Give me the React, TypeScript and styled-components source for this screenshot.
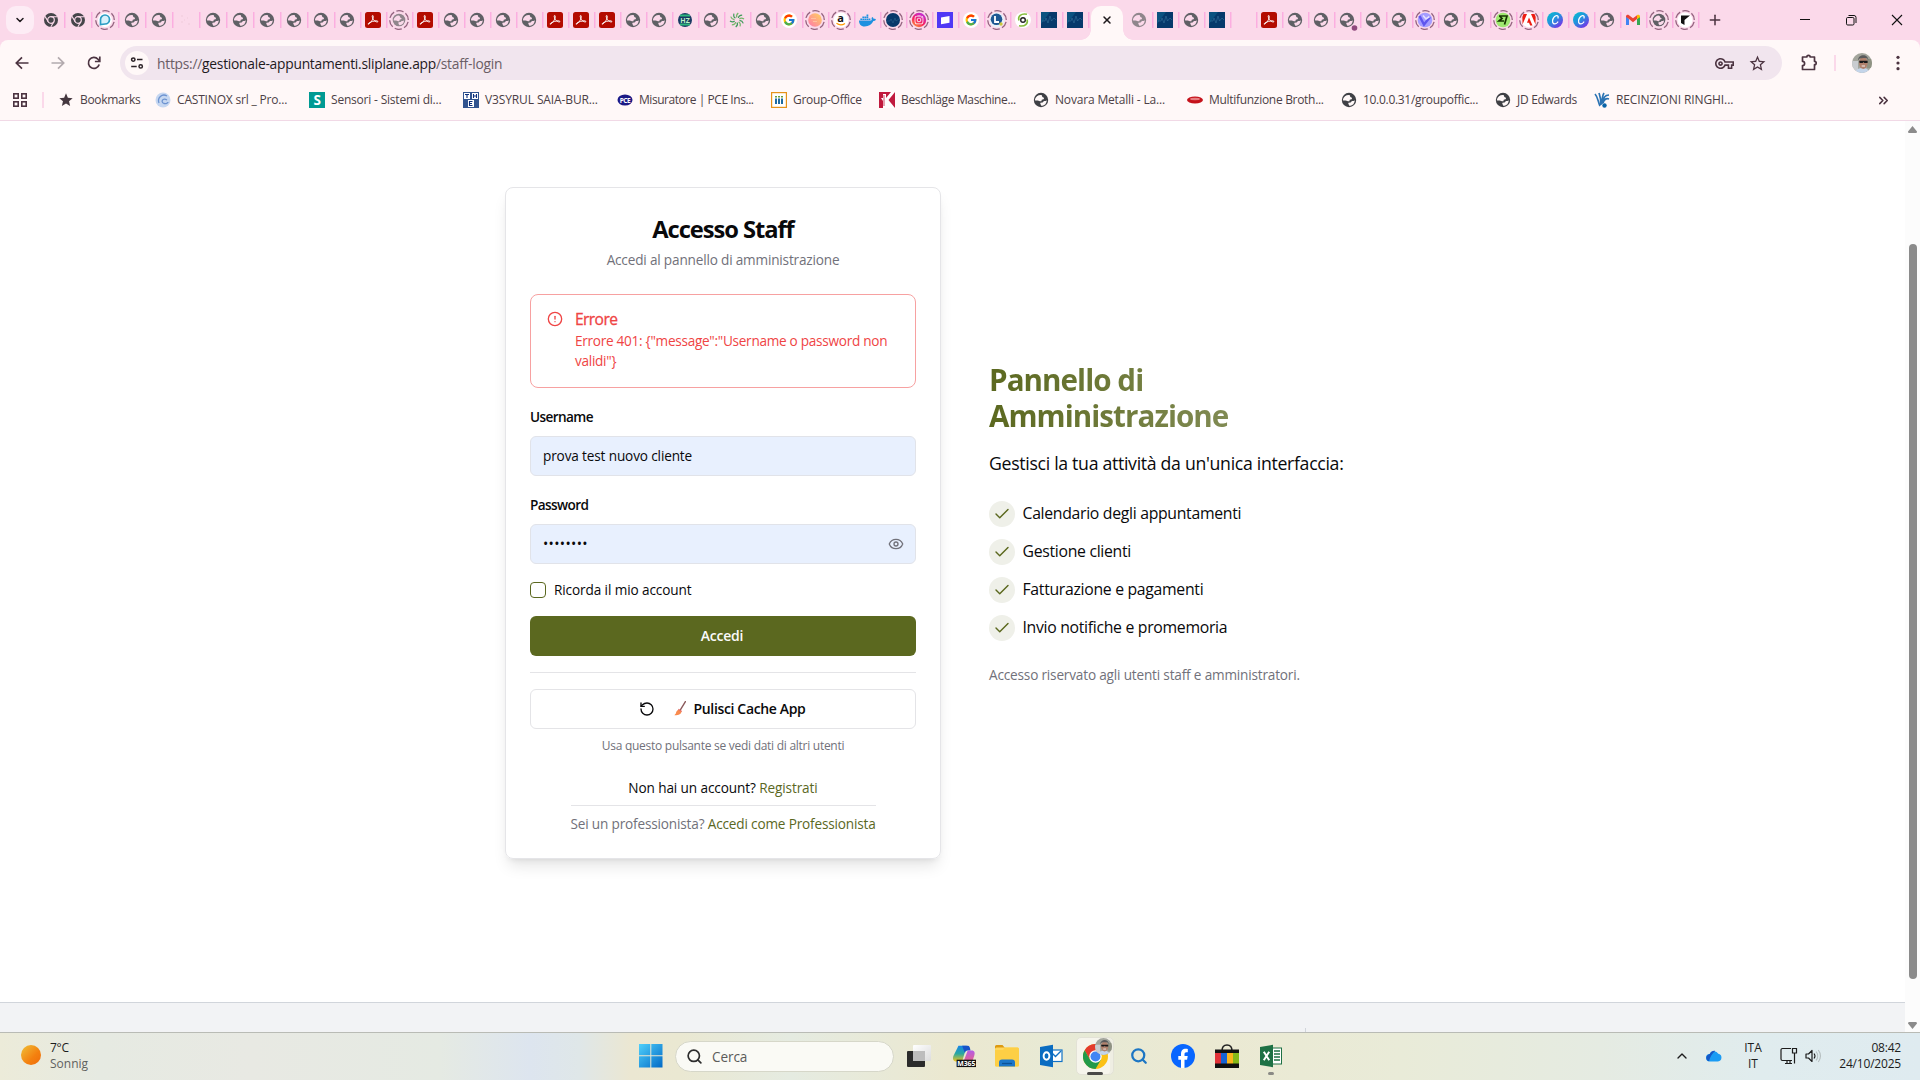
import React from "react";
import styled, { createGlobalStyle, css } from "styled-components";
import { Check, CircleAlert, Eye, RotateCcw, ChevronUp, ChevronDown, X, Plus, Search, ChevronsRight } from "lucide-react";
import { FcGoogle } from "react-icons/fc";
import { FaDocker, FaInstagram } from "react-icons/fa";
import { MdOutlineVpnKey, MdStarBorder, MdStar } from "react-icons/md";

const GlobalStyle = createGlobalStyle`
  * { box-sizing: border-box; }
  body { margin: 0; width: 1920px; height: 1080px; overflow: hidden; background: #fff; }
  body, button, input { font-family: "Open Sans", "Noto Sans", sans-serif; }
`;

const Screen = styled.div`
  width: 1920px;
  height: 1080px;
  display: flex;
  flex-direction: column;
  overflow: hidden;
`;

/* ---------- tab strip ---------- */

const TabStrip = styled.div`
  height: 40px;
  flex: none;
  display: flex;
  align-items: center;
  background: #fbd9ea;
  padding-left: 6px;
`;
const TabSearch = styled.div`
  width: 28px;
  height: 28px;
  margin-right: 3.5px;
  border-radius: 10px;
  background: #fdecf5;
  display: flex;
  align-items: center;
  justify-content: center;
`;
const Tab = styled.div<{ $w: number }>`
  width: ${(p) => p.$w}px;
  height: 16px;
  flex: none;
  display: flex;
  align-items: center;
  justify-content: center;
  border-right: 1px solid #fbaee0;
  box-shadow: 0.5px 0 0 #fbaee0;
`;
const ActiveTab = styled.div`
  width: 32px;
  height: 34px;
  flex: none;
  align-self: flex-end;
  margin: 0 3.5px 0 2.5px;
  border-radius: 10px 10px 0 0;
  background: #fff8f8;
  display: flex;
  align-items: center;
  justify-content: center;
  padding-bottom: 6px;
  position: relative;
  &::before, &::after {
    content: "";
    position: absolute;
    bottom: 0;
    width: 10px;
    height: 10px;
  }
  &::before { left: -10px; background: radial-gradient(circle at 0 0, transparent 9.5px, #fff8f8 10px); }
  &::after { right: -10px; background: radial-gradient(circle at 100% 0, transparent 9.5px, #fff8f8 10px); }
`;
const NewTab = styled.div`
  width: 16px;
  height: 16px;
  margin-left: 8px;
  color: #4c3441;
  display: flex;
`;
const WindowButtons = styled.div`
  margin-left: auto;
  display: flex;
  align-items: center;
  padding-right: 15px;
  gap: 30px;
  svg { display: block; }
`;

/* ---------- toolbar ---------- */

const ToolbarBack = styled.div`
  background: #fbd9ea;
  flex: none;
`;
const Toolbar = styled.div`
  height: 46px;
  background: #fff8f8;
  border-radius: 8px 8px 0 0;
  display: flex;
  align-items: center;
  padding: 0 12px 0 12px;
`;
const NavButton = styled.div<{ $dim?: boolean }>`
  width: 20px;
  height: 20px;
  flex: none;
  margin-right: 16px;
  color: ${(p) => (p.$dim ? "#b3aaae" : "#4c3441")};
  svg { display: block; }
`;
const UrlBar = styled.div`
  width: 1662px;
  height: 34px;
  flex: none;
  border-radius: 17px;
  background: #f1e5ee;
  display: flex;
  align-items: center;
  padding: 0 15px 0 5px;
  color: #5d5058;
`;
const SiteChip = styled.div`
  width: 24px;
  height: 24px;
  border-radius: 12px;
  background: #fff8f8;
  display: flex;
  align-items: center;
  justify-content: center;
`;
const Url = styled.div`
  margin-left: 8px;
  font-size: 13.8px;
  letter-spacing: -0.25px;
  color: #6a5d65;
  white-space: pre;
  flex: 1;
  b { font-weight: 400; color: #1f1a1d; }
`;
const UrlIcons = styled.div`
  display: flex;
  align-items: center;
  gap: 14px;
  color: #4c3441;
  svg { display: block; }
`;
const ToolbarRight = styled.div`
  display: flex;
  align-items: center;
  color: #4c3441;
  margin-left: 17px;
  svg { display: block; flex: none; }
`;
const ToolbarLine = styled.div`
  width: 2px;
  height: 16px;
  margin: 0 16px 0 15px;
  background: #fbd9ea;
`;

const Bookmarks = styled.div`
  height: 35px;
  flex: none;
  background: #fff8f8;
  border-bottom: 1px solid #f1d9e6;
  display: flex;
  align-items: center;
  padding: 0 29px 6px 12px;
`;
const BookmarkLine = styled.div`
  width: 2px;
  height: 16px;
  margin: 0 14px 0 14px;
  background: #fbd9ea;
`;
const Bookmark = styled.div<{ $w: number; $ls?: number }>`
  width: ${(p) => p.$w}px;
  flex: none;
  display: flex;
  align-items: center;
  gap: 6px;
  font-size: 12px;
  line-height: 16px;
  letter-spacing: ${(p) => p.$ls ?? -0.3}px;
  color: #4c3f46;
  white-space: nowrap;
  svg { display: block; flex: none; }
`;
const Overflow = styled.div`
  margin-left: auto;
  color: #4c3441;
  svg { display: block; }
`;

/* ---------- page ---------- */

const Viewport = styled.div`
  height: 911px;
  flex: none;
  display: flex;
`;
const Page = styled.div`
  width: 1905px;
  display: flex;
  flex-direction: column;
  background: #fff;
`;
const Main = styled.main`
  height: 881px;
  padding: 66px 0 0 505px;
  display: flex;
  align-items: flex-start;
  gap: 48px;
`;
const Card = styled.section`
  width: 436px;
  height: 672px;
  border: 1px solid #e5e5e8;
  border-radius: 8px;
  padding: 25px 24px 24px;
  box-shadow: 0 10px 15px -3px rgba(0, 0, 0, 0.1), 0 4px 6px -4px rgba(0, 0, 0, 0.1);
  display: flex;
  flex-direction: column;
`;
const Title = styled.h1`
  margin: 0;
  font-size: 23.7px;
  line-height: 32px;
  font-weight: 700;
  letter-spacing: -1.05px;
  text-align: center;
  color: #09090b;
`;
const Muted = styled.p<{ $small?: boolean; $top?: number }>`
  margin: ${(p) => p.$top ?? 0}px 0 0;
  font-size: ${(p) => (p.$small ? 12 : 13.6)}px;
  line-height: ${(p) => (p.$small ? 16 : 20)}px;
  letter-spacing: ${(p) => (p.$small ? -0.27 : -0.18)}px;
  text-align: center;
  color: #71717a;
  white-space: nowrap;
`;
const Alert = styled.div`
  height: 94px;
  margin-top: 24px;
  border: 1px solid #f7a1a1;
  border-radius: 8px;
  padding: 16px 16px;
  display: flex;
  gap: 12px;
  color: #ef4444;
  svg { flex: none; }
`;
const AlertTitle = styled.div`
  font-size: 15.6px;
  font-weight: 500;
  line-height: 17px;
  letter-spacing: -0.6px;
  margin-bottom: 3px;
  -webkit-text-stroke: 0.3px #ef4444;
`;
const AlertText = styled.div`
  font-size: 13.6px;
  line-height: 20px;
  letter-spacing: -0.28px;
  white-space: pre;
`;
const FieldLabel = styled.label`
  margin: 19px 0 9px;
  font-size: 13.6px;
  line-height: 20px;
  font-weight: 600;
  letter-spacing: -0.6px;
  color: #09090b;
`;
const Field = styled.div<{ $dots?: boolean }>`
  height: 40px;
  flex: none;
  border: 1px solid #e1e3e9;
  border-radius: 6px;
  background: #e8f0fe;
  padding: 0 11px 1px 12px;
  display: flex;
  align-items: center;
  justify-content: space-between;
  font-size: ${(p) => (p.$dots ? 14 : 13.6)}px;
  letter-spacing: ${(p) => (p.$dots ? 0.35 : -0.14)}px;
  color: #09090b;
  svg { color: #71717a; }
`;
const Remember = styled.label`
  margin-top: 16px;
  height: 20px;
  display: flex;
  align-items: center;
  gap: 8px;
  font-size: 13.6px;
  line-height: 20px;
  letter-spacing: -0.11px;
  color: #09090b;
`;
const Box = styled.span`
  width: 16px;
  height: 16px;
  border: 1px solid #5b681f;
  border-radius: 4px;
`;
const Button = styled.button<{ $primary?: boolean }>`
  height: 40px;
  flex: none;
  margin-top: 16px;
  padding: 0 2px 1px 0;
  border-radius: 6px;
  font-size: 14px;
  font-weight: 600;
  letter-spacing: ${(p) => (p.$primary ? -0.2 : -0.35)}px;
  display: flex;
  align-items: center;
  justify-content: center;
  ${(p) =>
    p.$primary
      ? css`border: 0; background: #5b681f; color: #fafafa;`
      : css`border: 1px solid #e4e4e7; background: #fff; color: #09090b;`}
`;
const ButtonText = styled.span`
  margin-left: 8px;
`;
const BroomSlot = styled.span`
  margin-left: 19px;
  display: flex;
`;
const Rule = styled.div`
  height: 1px;
  flex: none;
  margin-top: 16px;
  background: #e4e4e7;
`;
const Links = styled.div`
  align-self: center;
  width: 305px;
  margin-top: 24px;
  font-size: 13.6px;
  line-height: 20px;
  text-align: center;
  white-space: nowrap;
  color: #09090b;
`;
const LinkLine = styled.div<{ $muted?: boolean; $ls: number }>`
  letter-spacing: ${(p) => p.$ls}px;
  ${(p) => p.$muted && css`margin-top: 7px; padding-top: 8px; border-top: 1px solid #e4e4e7; color: #71717a;`}
  a { color: #5b681f; }
`;

const Info = styled.section`
  width: 411px;
  padding-top: 175px;
  color: #09090b;
`;
const Heading = styled.h2`
  margin: 0;
  font-size: 29.6px;
  line-height: 36px;
  font-weight: 700;
  letter-spacing: -0.95px;
  color: transparent;
  background: linear-gradient(to right, #5b681f, #9ca479);
  background-clip: text;
  -webkit-background-clip: text;
  white-space: pre;
`;
const Lead = styled.p`
  margin: 15px 0 0;
  font-size: 17.7px;
  line-height: 28px;
  letter-spacing: -0.31px;
  white-space: nowrap;
`;
const List = styled.ul`
  margin: 24px 0 0;
  padding: 0;
  list-style: none;
  display: grid;
  gap: 12px;
`;
const Item = styled.li`
  height: 26px;
  display: flex;
  align-items: center;
  gap: 8px;
  font-size: 15.8px;
  letter-spacing: -0.31px;
  span + span { line-height: 24px; padding-bottom: 2px; margin-left: -0.5px; }
`;
const Bullet = styled.span`
  width: 26px;
  height: 26px;
  border-radius: 50%;
  background: #eff0e9;
  color: #5b681f;
  display: flex;
  align-items: center;
  justify-content: center;
`;
const Note = styled(Muted)`
  margin-top: 24px;
  text-align: left;
`;
const Footer = styled.footer`
  height: 30px;
  border-top: 1px solid #d1d5db;
  background: #f2f3f5;
  padding: 25px 0 0 1305px;
`;
const FooterTick = styled.div`
  width: 1px;
  height: 4px;
  background: #d1d5db;
`;
const Scrollbar = styled.div`
  width: 15px;
  background: #fcfcfc;
  display: flex;
  flex-direction: column;
  align-items: center;
  justify-content: space-between;
  padding: 5px 0 3px 0;
  svg { display: block; }
`;
const Thumb = styled.div`
  width: 8px;
  height: 735px;
  margin-top: 68px;
  border-radius: 4px;
  background: #8b8b8b;
`;

/* ---------- taskbar ---------- */

const Taskbar = styled.div`
  height: 48px;
  flex: none;
  border-top: 1px solid #b9bbb5;
  background: linear-gradient(to right, #ecebd9 0, #e6eae2 100px, #e8e9e3 250px, #e5eae3 440px, #dde5ef 530px, #dfe7e8 580px, #ebe7d2 630px,
    #eae8d2 680px, #e5ebe1 790px, #ebe8d0 950px, #e7ead6 1080px, #ebe9d2 1200px, #e9ebd8 1400px, #e5ebe2 1600px, #e0ecee 1760px, #dfebf0 1920px);
  display: flex;
  align-items: center;
  padding: 0 19px 1px 21px;
  svg { display: block; flex: none; }
`;
const Sun = styled.div`
  width: 20px;
  height: 20px;
  border-radius: 50%;
  margin-top: -2px;
  background: linear-gradient(135deg, #efc138, #f4810f 60%, #ee6a0a);
`;
const Weather = styled.div`
  width: 589px;
  margin: 0 0 0 9px;
  font-size: 12px;
  line-height: 16px;
  letter-spacing: -0.3px;
  color: #1c1c1c;
  span { color: #5f615e; letter-spacing: 0; }
`;
const TaskSearch = styled.div`
  width: 219px;
  height: 31px;
  margin: 0 12px 0 12px;
  border-radius: 16px;
  border: 1px solid #d6d7c9;
  background: #fafaf5;
  display: flex;
  align-items: center;
  padding-left: 10px;
  gap: 9px;
  font-size: 13.6px;
  letter-spacing: -0.1px;
  color: #5c5c5a;
  svg { color: #2d2d2d; }
`;
const TaskIcon = styled.div<{ $w?: number; $before?: number }>`
  width: ${(p) => p.$w ?? 44}px;
  height: 46px;
  flex: none;
  margin-left: ${(p) => p.$before ?? 0}px;
  display: flex;
  align-items: center;
  justify-content: center;
  position: relative;
`;
const ActiveTile = styled.div`
  width: 38px;
  height: 38px;
  border-radius: 5px;
  border: 1px solid #e3e2d6;
  background: #f6f5ec;
  box-shadow: inset -3px 0 0 #efeee3;
  display: flex;
  align-items: center;
  justify-content: center;
`;
const FaceBadge = styled.div`
  position: absolute;
  left: 22px;
  top: 5px;
`;
const Indicator = styled.div<{ $w: number; $c: string }>`
  position: absolute;
  bottom: 4px;
  left: calc(50% - ${(p) => p.$w / 2}px);
  width: ${(p) => p.$w}px;
  height: 3px;
  border-radius: 2px;
  background: ${(p) => p.$c};
`;
const Tray = styled.div`
  margin-left: auto;
  display: flex;
  align-items: center;
  color: #1c1c1c;
  font-size: 12px;
  line-height: 16px;
`;
const CloudSlot = styled.div`
  margin-left: 16px;
`;
const Lang = styled.div`
  width: 46px;
  margin: 0 4px 0 8px;
  text-align: center;
`;
const Clock = styled.div`
  width: 71px;
  text-align: right;
  letter-spacing: -0.2px;
  white-space: nowrap;
`;

/* ---------- drawings ---------- */

const Globe = ({ c = "#5f6065", s = 16, hole = "#fbd9ea" }: { c?: string; s?: number; hole?: string }) => (
  <svg width={s} height={s} viewBox="0 0 16 16">
    <circle cx="8" cy="8" r="7.2" fill={c} />
    <path d="M8.2 3c1 .2.8 1.400 1.200 2 .5.600 1.700.2 1.600 1.400-.1 1.100-1.500.8-2.200 1.300-.7.5.3 1.300-.6 1.600-1.200.3-2.200-.7-3.500-.8-1-.1-2.200.100-2.900-.3A6 6 0 0 1 8.200 3z" fill={hole} />
    <path d="M13.800 8.200c-1 .8-1.700.9-2.500.9-.9.100-.8 1.100-1.700 1.300-.9.300-2.200-.2-2.300.9-.1.900.8 1.700 1.300 2.600a6 6 0 0 0 5.200-5.700z" fill={hole} />
  </svg>
);
const Ring = ({ children }: { children?: React.ReactNode }) => (
  <svg width="20" height="20" viewBox="0 0 20 20" overflow="visible">
    <circle cx="10" cy="10" r="9.300" fill="none" stroke="#94637f" strokeWidth="1.300" strokeDasharray="7.300 2.440" transform="rotate(12 10 10)" />
    {children}
  </svg>
);
const ChromeMono = () => (
  <svg width="16" height="16" viewBox="0 0 16 16">
    <circle cx="8" cy="8" r="7" fill="#45454a" />
    <circle cx="8" cy="8" r="3.300" fill="none" stroke="#fbd9ea" strokeWidth="1.200" />
    <path d="M8 4.700h6.300M5.200 9.700 2 4.400M10.800 9.700l-3 5.200" stroke="#fbd9ea" strokeWidth="1.100" />
  </svg>
);
const Pdf = () => (
  <svg width="16" height="16" viewBox="0 0 16 16">
    <rect width="16" height="16" rx="2.500" fill="#b30b00" />
    <path d="M3.300 12.200c2.500-1 5.600-6 4.800-8.400-.3-.7-1-.3-.9.500.3 2.800 2.500 5.800 5.300 5.600.8-.2.400-1.100-.9-1.100-2.700 0-5.400.8-7.800 2.300-.8.700-.9 1.200-.5 1.100z" fill="none" stroke="#fff" strokeWidth="1" />
  </svg>
);
const Wave = () => (
  <svg width="16" height="16" viewBox="0 0 16 16">
    <rect width="16" height="16" fill="#06396b" />
    <path d="M0 0h9L0 12z" fill="#0b5280" />
    <path d="M1 9h3l1-3 2 5 2-7 1.500 5L13 6l2 2" fill="none" stroke="#3d7ba3" strokeWidth=".5" />
  </svg>
);
const GoogleDot = () => (
  <svg width="16" height="16" viewBox="0 0 16 16">
    <circle cx="8" cy="8" r="8" fill="#fff" />
    <FcGoogle x={1.5} y={1.5} size={13} />
  </svg>
);
const Canva = () => (
  <svg width="16" height="16" viewBox="0 0 16 16">
    <defs>
      <linearGradient id="canva" x1="0" y1="0" x2=".8" y2="1">
        <stop offset="0" stopColor="#00c4cc" />
        <stop offset=".5" stopColor="#2492de" />
        <stop offset="1" stopColor="#7d2ae8" />
      </linearGradient>
    </defs>
    <circle cx="8" cy="8" r="8" fill="url(#canva)" />
    <path d="M11 6c.6-1.600-.4-2.600-1.700-2.300C6.800 4.200 4.800 8 5.700 10.400c.8 2.100 3.600 2 5.100-.4" fill="none" stroke="#fff" strokeWidth="1.300" strokeLinecap="round" />
  </svg>
);
const Hze = () => (
  <svg width="16" height="16" viewBox="0 0 16 16">
    <circle cx="8" cy="8" r="7" fill="#173a63" />
    <path d="M3 3.500h10M3 12.500h10" stroke="#2eb67d" strokeWidth="1.800" />
    <text x="8" y="10.500" fontSize="7" fontWeight="700" textAnchor="middle" fill="#b8f4c3" fontFamily="Open Sans">HZ</text>
  </svg>
);
const Burst = () => (
  <svg width="16" height="16" viewBox="0 0 16 16">
    {Array.from({ length: 10 }, (_, i) => (
      <path key={i} d="M8 5.500C7 4 7.500 2.500 9.300 1" fill="none" stroke={i % 2 ? "#3f9b5b" : "#74b868"} strokeWidth="1.200" transform={`rotate(${i * 36} 8 8)`} />
    ))}
  </svg>
);
const Face = ({ s }: { s: number }) => (
  <svg width={s} height={s} viewBox="0 0 20 20">
    <defs><clipPath id="face"><circle cx="10" cy="10" r="10" /></clipPath></defs>
    <g clipPath="url(#face)">
      <rect width="20" height="20" fill="#a3a59c" />
      <path d="M0 8h6v12H0z" fill="#c9ccd0" />
      <path d="M15 6h5v9h-5z" fill="#8f9283" />
      <path d="M3 20c1-4 4-5 8-5s6 2 7 5z" fill="#c4d5ea" />
      <ellipse cx="11.300" cy="10" rx="4.300" ry="6" fill="#b0816d" />
      <path d="M6 7.500c0-6.500 10-7.500 10.500 0l-1.200-2c-2.700-.7-5.600-.6-7.800 0z" fill="#5a5a5c" />
      <path d="M7.200 7.800h8.400v2.200h-3.300l-.8-.9-.8.9H7.600z" fill="#17181b" />
      <path d="M9.700 13h3.300" stroke="#f4eeee" strokeWidth="1" />
    </g>
  </svg>
);

const icons: Record<string, React.ReactNode> = {
  c: <ChromeMono />,
  g: <Globe />,
  p: <Pdf />,
  w: <Wave />,
  G: <GoogleDot />,
  C: <Canva />,
  h: <Hze />,
  b: <Burst />,
  d: <Globe c="#8f868c" />,
  D: <FaDocker size={17} color="#1d91e0" />,
  _: null,
  f: (
    <svg width="16" height="16" viewBox="0 0 16 16"><path d="M3 4h2M3 10h2M9 6h1M10 12h2M6 8h1" stroke="#f3cfe0" strokeWidth="1.500" /></svg>
  ),
  q: (
    <Ring>
      <circle cx="10" cy="10" r="7" fill="#fff" />
      <path d="M5.500 14.500V9.500a4.500 4.500 0 1 1 4.500 4.500z" fill="#d8f1fb" stroke="#2b9cc4" strokeWidth="1.700" />
    </Ring>
  ),
  r: <Ring><g transform="translate(3 3)"><Globe c="#8f868c" s={14} /></g></Ring>,
  R: <Ring><g transform="translate(3 3)"><Globe s={14} /></g></Ring>,
  o: (
    <Ring>
      <defs><linearGradient id="peach" x1="0" y1="1" x2="1" y2="0"><stop offset="0" stopColor="#ff78ad" /><stop offset="1" stopColor="#ffd45c" /></linearGradient></defs>
      <circle cx="10" cy="10" r="6.800" fill="url(#peach)" />
      <path d="M6 8.500h5M8 11.500h4" stroke="#ffc1a0" strokeWidth="1" />
    </Ring>
  ),
  a: (
    <Ring>
      <circle cx="10" cy="10" r="7.500" fill="#fff" />
      <text x="9.600" y="11.800" fontSize="11" fontWeight="700" textAnchor="middle" fontFamily="Open Sans" fill="#111">a</text>
      <path d="M5.500 13.300c2.500 1.900 6 1.900 8.500.2" fill="none" stroke="#ff9900" strokeWidth="1.300" />
    </Ring>
  ),
  W: <Ring><circle cx="10" cy="10" r="7" fill="#07396a" /><path d="M4 11h3l1-2 2 4 2-5 1 3 3-2" stroke="#2f6690" fill="none" strokeWidth=".5" /></Ring>,
  i: (
    <Ring>
      <defs><linearGradient id="insta" x1="0" y1="1" x2=".6" y2="0"><stop offset="0" stopColor="#ffb02e" /><stop offset=".5" stopColor="#f7215e" /><stop offset="1" stopColor="#c42bd3" /></linearGradient></defs>
      <circle cx="10" cy="10" r="7.200" fill="url(#insta)" />
      <FaInstagram x={5} y={5} size={10} color="#fff" />
    </Ring>
  ),
  s: (
    <svg width="16" height="16" viewBox="0 0 16 16"><rect width="16" height="16" fill="#5038f5" /><path d="M4 5.500 12.500 4v6.800L4 12.200z" fill="#fff" /></svg>
  ),
  L: (
    <Ring>
      <circle cx="10" cy="10" r="7.500" fill="#e9f1f8" />
      <circle cx="9.500" cy="9.300" r="5.800" fill="#1d5793" />
      <path d="M8 6v6h4" stroke="#fff" strokeWidth="1.800" fill="none" />
      <circle cx="14" cy="14" r="1.700" fill="#cbc53b" />
    </Ring>
  ),
  O: (
    <svg width="16" height="16" viewBox="0 0 16 16">
      <circle cx="8" cy="8" r="8" fill="#fff" />
      <circle cx="8" cy="8" r="2.300" fill="none" stroke="#222" strokeWidth="1.400" />
      <path d="M12 2.300C6 1 2.500 4.500 4 8.500M4 13.700c6 1.300 9.500-2.200 8-6.200" fill="none" stroke="#86bd3c" strokeWidth="1.600" />
    </svg>
  ),
  m: <svg width="16" height="20" viewBox="0 0 16 20" overflow="visible"><g transform="translate(0 2)"><Globe /></g><circle cx="15.500" cy="18" r="2.800" fill="#8f4a7d" /></svg>,
  v: (
    <Ring>
      <circle cx="10" cy="10" r="7.300" fill="#a59dff" />
      <path d="M4.500 6 9 14.500 15 7" fill="none" stroke="#5f55ee" strokeWidth="2.400" />
      <path d="M8 5.500 11 9l3.500-2.500" fill="none" stroke="#e4e1ff" strokeWidth="1.600" />
    </Ring>
  ),
  z: (
    <Ring><circle cx="10" cy="10" r="7.300" fill="#9fe870" /><path d="M6 6h8l-2.500 8.500M6.500 6 9 8.500 6 11h5" fill="none" stroke="#163300" strokeWidth="1.700" /></Ring>
  ),
  A: (
    <Ring><circle cx="10" cy="10" r="7.300" fill="#fff" /><path d="M3.500 14.500 8 4H4.500l-1.200 3zM16.500 14.500 12 4h3.500l1.200 3zM10 7.500l3.500 8h-2.300L10 12.700H8z" fill="#ed1c12" /></Ring>
  ),
  M: (
    <svg width="16" height="16" viewBox="0 0 16 16">
      <path d="M1 4v9h3V7z" fill="#4285f4" /><path d="M15 4v9h-3V7z" fill="#34a853" />
      <path d="M1 4.500C1 2.800 2.800 2.200 4 3.200L8 6.300l4-3.100V7L8 10.200 4 7 1 5z" fill="#ea4335" /><path d="M12 3.200c1.200-1 3-.4 3 1.300v.7L12 7z" fill="#fbbc04" />
    </svg>
  ),
  F: <Ring><circle cx="10" cy="10" r="7.500" fill="#fff" /><path d="M6 5.500h9L9.500 10v5L6 13z" fill="#111" /></Ring>,
};

const leftTabs = "ccqggfggggggprpggggpppgghgbgGoaDWisGLOww";
const rightTabs = "dwgw_pggmggvggzACCgMRF";

const Back = ({ flip }: { flip?: boolean }) => (
  <svg width="20" height="20" viewBox="0 0 20 20">
    <path transform={flip ? "rotate(180 10 10)" : undefined} d="M16.500 10H4.500M10 4.300 4.300 10 10 15.700" fill="none" stroke="currentColor" strokeWidth="1.700" />
  </svg>
);

const bookmarks: { t: string; w: number; ls?: number; icon: React.ReactNode }[] = [
  { t: "Bookmarks", w: 97, icon: <MdStar size={16} color="#45373f" /> },
  { t: "CASTINOX srl _ Pro...", w: 154, ls: -0.18, icon: (
    <svg width="16" height="16" viewBox="0 0 16 16"><circle cx="8" cy="8" r="7.500" fill="#c6d7f1" /><path d="M12 4C7 1 2 6 4 11M12 8c-4-3-7 2-3 3.500 2 .5 4-.5 4-1.500" fill="none" stroke="#6d93d0" strokeWidth="1.300" /></svg>) },
  { t: "Sensori - Sistemi di...", w: 154, ls: -0.2, icon: (
    <svg width="16" height="16" viewBox="0 0 16 16"><rect width="16" height="16" fill="#009a93" /><text x="8" y="13" fontSize="13.500" fontWeight="700" textAnchor="middle" fontFamily="Open Sans" fill="#fff">S</text></svg>) },
  { t: "V3SYRUL SAIA-BUR...", w: 154, ls: -0.12, icon: (
    <svg width="16" height="16" viewBox="0 0 16 16"><rect width="16" height="16" fill="#31538f" /><path d="M1 1h6v6H1zM9 1h6v6H9zM5 8h6v7H5z" fill="#fff" /><path d="M2 2.500h4M4 2.500V6M10.500 2v4M13.500 2v4M10.500 4h3M9.500 9.500h-3v4h3M6.500 11.500h2.500" stroke="#0d2d7a" strokeWidth="1.100" fill="none" /></svg>) },
  { t: "Misuratore | PCE Ins...", w: 154, ls: -0.45, icon: (
    <svg width="16" height="16" viewBox="0 0 16 16"><ellipse cx="8" cy="8" rx="7.500" ry="5.500" fill="#1c1a85" /><text x="8" y="10.500" fontSize="6.500" fontWeight="700" textAnchor="middle" fontFamily="Open Sans" fill="#fff">PCE</text></svg>) },
  { t: "Group-Office", w: 108, icon: (
    <svg width="16" height="16" viewBox="0 0 16 16"><rect x=".6" y=".6" width="14.800" height="14.800" fill="#fff" stroke="#e5931b" strokeWidth="1.200" /><path d="M5 6.500V12M8 6.500V12M11 6.500V12" stroke="#1d6ba3" strokeWidth="2" /><path d="M4 4.800h8" stroke="#6a9d3a" strokeWidth="1.500" strokeDasharray="2 1" /></svg>) },
  { t: "Beschläge Maschine...", w: 154, ls: -0.35, icon: (
    <svg width="16" height="16" viewBox="0 0 16 16"><rect width="16" height="16" fill="#c01a3e" /><path d="M4 2h3v4l5-6h4L9.500 8 16 16H4V9L2 6h2z" fill="#fff" /><path d="M5 3v11" stroke="#c01a3e" strokeWidth=".8" /></svg>) },
  { t: "Novara Metalli - La...", w: 154, ls: -0.17, icon: <Globe c="#3f4045" hole="#fff8f8" /> },
  { t: "Multifunzione Broth...", w: 154, icon: (
    <svg width="16" height="16" viewBox="0 0 16 16"><ellipse cx="8" cy="8" rx="8" ry="3.500" fill="#c5121b" /><ellipse cx="8" cy="7" rx="5" ry="1.200" fill="#e77d80" /></svg>) },
  { t: "10.0.0.31/groupoffic...", w: 154, icon: <Globe c="#3f4045" hole="#fff8f8" /> },
  { t: "JD Edwards", w: 99, icon: <Globe c="#3f4045" hole="#fff8f8" /> },
  { t: "RECINZIONI RINGHI...", w: 150, ls: -0.1, icon: (
    <svg width="16" height="16" viewBox="0 0 16 16"><path d="M1 2c3 3 3 8 5 12M5 1c1 3 2 5 2 12M10 1C8 4 8 6 8 12M15 3c-4 0-6 3-6 8M15 7c-3-1-5 1-6 4" fill="none" stroke="#2b73b3" strokeWidth="1.700" /><circle cx="10.500" cy="13.500" r="2.200" fill="#0a64a8" /></svg>) },
];

const Browser = () => (
  <>
    <TabStrip>
      <TabSearch><ChevronDown size={12} strokeWidth={3} color="#1f1a1d" /></TabSearch>
      {leftTabs.split("").map((k, i) => (
        <Tab key={i} $w={i < 11 ? 27 : 26}>{icons[k]}</Tab>
      ))}
      <ActiveTab><X size={12} strokeWidth={3} color="#1f1a1d" /></ActiveTab>
      {rightTabs.split("").map((k, i) => (
        <Tab key={i} $w={26}>{icons[k]}</Tab>
      ))}
      <NewTab><Plus size={16} strokeWidth={2.300} /></NewTab>
      <WindowButtons>
        <svg width="16" height="16" viewBox="0 0 16 16"><path d="M3 7.500h10" stroke="#111" /></svg>
        <svg width="16" height="16" viewBox="0 0 16 16"><rect x="3.500" y="5.500" width="7.500" height="7.500" rx="1.200" fill="none" stroke="#111" /><path d="M5.500 3.500H11a2 2 0 0 1 2 2V11" fill="none" stroke="#111" /></svg>
        <svg width="16" height="16" viewBox="0 0 16 16"><path d="m3 3 10 10M13 3 3 13" stroke="#111" strokeWidth="1.100" /></svg>
      </WindowButtons>
    </TabStrip>
    <ToolbarBack>
      <Toolbar>
        <NavButton><Back /></NavButton>
        <NavButton $dim><Back flip /></NavButton>
        <NavButton>
          <svg width="20" height="20" viewBox="0 0 20 20"><path d="M15.200 11.500A5.500 5.500 0 1 1 14 6.200l1.300 1.600" fill="none" stroke="currentColor" strokeWidth="1.700" /><path d="M15.800 3.600v4.900h-4.900" fill="none" stroke="currentColor" strokeWidth="1.700" /></svg>
        </NavButton>
        <UrlBar>
          <SiteChip>
            <svg width="14" height="14" viewBox="0 0 14 14"><g fill="none" stroke="#2b2227" strokeWidth="1.500"><circle cx="3.300" cy="3.600" r="1.700" /><path d="M7 3.600h5.500M1.200 10.400h5.500" /><circle cx="10.700" cy="10.400" r="1.700" /></g></svg>
          </SiteChip>
          <Url>https://<b>gestionale-appuntamenti.sliplane.app</b>/staff-login</Url>
          <UrlIcons>
            <MdOutlineVpnKey size={19} />
            <MdStarBorder size={19} />
          </UrlIcons>
        </UrlBar>
        <ToolbarRight>
          <svg width="20" height="20" viewBox="0 0 20 20"><path d="M3.500 4h4.300a1.700 1.700 0 0 1 3.400 0h4.300v4.300a1.700 1.700 0 0 1 0 3.400v4.800h-12v-4a2 2 0 0 0 0-4.200z" fill="none" stroke="currentColor" strokeWidth="1.700" strokeLinejoin="round" /></svg>
          <ToolbarLine />
          <Face s={20} />
          <svg width="36" height="20" viewBox="0 0 36 20"><g fill="currentColor"><circle cx="26" cy="4.300" r="1.600" /><circle cx="26" cy="10" r="1.600" /><circle cx="26" cy="15.700" r="1.600" /></g></svg>
        </ToolbarRight>
      </Toolbar>
    </ToolbarBack>
    <Bookmarks>
      <svg width="16" height="16" viewBox="0 0 16 16"><g fill="none" stroke="#4c3441" strokeWidth="1.600"><rect x="1.800" y="1.800" width="4.400" height="4.400" /><rect x="9.800" y="1.800" width="4.400" height="4.400" /><rect x="1.800" y="9.800" width="4.400" height="4.400" /><rect x="9.800" y="9.800" width="4.400" height="4.400" /></g></svg>
      <BookmarkLine />
      {bookmarks.map((b) => (
        <Bookmark key={b.t} $w={b.w} $ls={b.ls}>{b.icon}<span>{b.t}</span></Bookmark>
      ))}
      <Overflow><ChevronsRight size={15} strokeWidth={2.500} /></Overflow>
    </Bookmarks>
  </>
);

const Broom = () => (
  <svg width="12" height="15" viewBox="0 0 12 15">
    <path d="M11.400.6 6.500 8.600" stroke="#8a5a5c" strokeWidth="1.400" strokeLinecap="round" />
    <path d="M4.200 8.800 7.500 10.800C7 13 5.500 14.300.5 14.300c.3-.9 1-1 1.300-1.800.5-1.700 1-3 2.400-3.700z" fill="#f98b4e" />
    <path d="M4.600 7.800 8 9.900l-.5 1-3.400-2z" fill="#e0635a" />
  </svg>
);

const features = [
  "Calendario degli appuntamenti",
  "Gestione clienti",
  "Fatturazione e pagamenti",
  "Invio notifiche e promemoria",
];

const Login = () => (
  <Page>
    <Main>
      <Card>
        <Title>Accesso Staff</Title>
        <Muted $top={5}>Accedi al pannello di amministrazione</Muted>
        <Alert>
          <CircleAlert size={16} />
          <div>
            <AlertTitle>Errore</AlertTitle>
            <AlertText>{'Errore 401: {"message":"Username o password non\nvalidi"}'}</AlertText>
          </div>
        </Alert>
        <FieldLabel>Username</FieldLabel>
        <Field>prova test nuovo cliente</Field>
        <FieldLabel>Password</FieldLabel>
        <Field $dots>••••••••<Eye size={16} /></Field>
        <Remember><Box />Ricorda il mio account</Remember>
        <Button $primary>Accedi</Button>
        <Rule />
        <Button><RotateCcw size={16} /><BroomSlot><Broom /></BroomSlot><ButtonText>Pulisci Cache App</ButtonText></Button>
        <Muted $small $top={9}>Usa questo pulsante se vedi dati di altri utenti</Muted>
        <Links>
          <LinkLine $ls={-0.11}>Non hai un account? <a>Registrati</a></LinkLine>
          <LinkLine $muted $ls={-0.17}>Sei un professionista? <a>Accedi come Professionista</a></LinkLine>
        </Links>
      </Card>
      <Info>
        <Heading>{"Pannello di\nAmministrazione"}</Heading>
        <Lead>Gestisci la tua attività da un'unica interfaccia:</Lead>
        <List>
          {features.map((t) => (
            <Item key={t}><Bullet><Check size={18} strokeWidth={1.900} /></Bullet><span>{t}</span></Item>
          ))}
        </List>
        <Note $top={24}>Accesso riservato agli utenti staff e amministratori.</Note>
      </Info>
    </Main>
    <Footer><FooterTick /></Footer>
  </Page>
);

const WindowsTaskbar = () => (
  <Taskbar>
    <Sun />
    <Weather>7°C<br /><span>Sonnig</span></Weather>
    <svg width="24" height="24" viewBox="0 0 24 24">
      <defs><linearGradient id="win" x1="0" y1="0" x2="24" y2="24" gradientUnits="userSpaceOnUse"><stop offset="0" stopColor="#4fd0fb" /><stop offset="1" stopColor="#0067c5" /></linearGradient></defs>
      <path d="M0 0h11.300v11.300H0zM12.300 0H23.500v11.300H12.300zM0 12.300h11.300v11.200H0zM12.300 12.300h11.200v11.200H12.300z" fill="url(#win)" />
    </svg>
    <TaskSearch><Search size={17} strokeWidth={2.400} />Cerca</TaskSearch>
    <TaskIcon $w={26}>
      <svg width="26" height="24" viewBox="0 0 26 24">
        <defs><linearGradient id="tv" x1="0" y1="0" x2="1" y2="1"><stop offset="0" stopColor="#fff" /><stop offset="1" stopColor="#dcdcdc" /></linearGradient></defs>
        <rect x="1" y="7" width="18" height="16" rx="1" fill="#2b2b2b" /><rect x="7" y="1" width="18" height="16" rx="1" fill="url(#tv)" /><rect x="7" y="7" width="12" height="10" fill="#bdbdbd" />
      </svg>
    </TaskIcon>
    <TaskIcon $w={43} $before={10}>
      <svg width="24" height="26" viewBox="0 0 26 26" overflow="visible">
        <defs>
          <linearGradient id="cpa" x1="0" y1="0" x2="0" y2="1"><stop offset="0" stopColor="#1784e8" /><stop offset=".5" stopColor="#29a8a0" /><stop offset="1" stopColor="#f4c51c" /></linearGradient>
          <linearGradient id="cpb" x1="0" y1="0" x2="0" y2="1"><stop offset="0" stopColor="#b35be8" /><stop offset="1" stopColor="#f6656c" /></linearGradient>
        </defs>
        <path d="M7 2h9L11 19H5c-4 0-4.500-3-3.500-6z" fill="url(#cpa)" />
        <path d="M11 2h6c2 0 2.500 2 3 5h-3c-2 0-2.500 1-3 3z" fill="#1753c9" />
        <path d="M17 7h4c4 0 4 3 3 6l-2 6c-.8 2.500-2 4-5 4h-6z" fill="url(#cpb)" />
        <rect x="5" y="17" width="21" height="8" fill="#111" />
        <text x="15.500" y="23.600" fontSize="7.500" fontWeight="700" textAnchor="middle" fontFamily="Open Sans" fill="#fff">M365</text>
      </svg>
    </TaskIcon>
    <TaskIcon>
      <svg width="24" height="22" viewBox="0 0 24 22">
        <path d="M0 1.500A1.500 1.500 0 0 1 1.500 0h6l2.500 3v4H0z" fill="#dd9a12" /><rect y="2.500" width="24" height="19" rx="1.500" fill="#ffd75e" /><path d="M0 5h8l2-2.500h12.500A1.500 1.500 0 0 1 24 4v16a1.500 1.500 0 0 1-1.500 1.500h-21A1.500 1.500 0 0 1 0 20z" fill="#fdcf45" />
        <path d="M4 21.500v-4a3 3 0 0 1 3-3h10a3 3 0 0 1 3 3v4z" fill="#1c77c9" /><path d="M7 18.500h10" stroke="#0c5296" strokeWidth="1.300" />
      </svg>
    </TaskIcon>
    <TaskIcon>
      <svg width="24" height="24" viewBox="0 0 24 24">
        <rect x="11" y="6" width="12" height="11.500" fill="#fff" stroke="#1272c5" strokeWidth="1.200" /><path d="m12 8 4.500 4.500L22 7" fill="none" stroke="#1272c5" strokeWidth="1.400" />
        <path d="M1 3 14 .8v22.400L1 21z" fill="#0a6cc1" /><ellipse cx="7.500" cy="12" rx="2.900" ry="3.700" fill="none" stroke="#fff" strokeWidth="1.900" />
      </svg>
    </TaskIcon>
    <TaskIcon>
      <ActiveTile>
        <svg width="25" height="25" viewBox="0 0 24 24">
          <circle cx="12" cy="12" r="12" fill="#fbc116" /><path d="M1.600 6A12 12 0 0 1 22.400 6H12L6.800 15z" fill="#e33b2e" /><path d="M1.600 6A12 12 0 0 0 12 24l5.200-9H6.800z" fill="#229a4a" />
          <circle cx="12" cy="12" r="6" fill="#fff" /><circle cx="12" cy="12" r="4.800" fill="#4285f4" />
        </svg>
      </ActiveTile>
      <FaceBadge><Face s={17} /></FaceBadge>
      <Indicator $w={16} $c="#4a4a48" />
    </TaskIcon>
    <TaskIcon><Search size={18} strokeWidth={3} color="#1c76c4" /></TaskIcon>
    <TaskIcon>
      <svg width="24" height="24" viewBox="0 0 24 24"><circle cx="12" cy="12" r="12" fill="#0866ff" /><path d="M10 24v-8.300H7.300V12H10v-1.800c0-3.900 1.800-5.400 4.800-5.400.7 0 1.500.1 2 .2v3.200h-1.300c-1.500 0-2 .7-2 2V12h3.200l-.6 3.700h-2.600V24z" fill="#fff" /></svg>
    </TaskIcon>
    <TaskIcon>
      <svg width="24" height="24" viewBox="0 0 24 24">
        <path d="M7 7c0-4 2-6 5-6s5 2 5 6" fill="none" stroke="#222" strokeWidth="1.500" /><rect y="5.500" width="24" height="18.500" fill="#111" />
        <rect y="9" width="6" height="10.500" fill="#e13238" /><rect x="6" y="9" width="6" height="10.500" fill="#1763d4" /><rect x="12" y="9" width="6" height="10.500" fill="#fbb51c" /><rect x="18" y="9" width="6" height="10.500" fill="#86b91a" />
      </svg>
    </TaskIcon>
    <TaskIcon>
      <svg width="24" height="24" viewBox="0 0 24 24">
        <rect x="12" y="4" width="10.500" height="16" fill="#fff" stroke="#1e7145" strokeWidth="1" /><path d="M15 7h6M15 10h6M15 13h6M15 16h6" stroke="#1e7145" strokeWidth="1.300" />
        <path d="M1 3 14 .8v22.400L1 21z" fill="#1e7145" /><path d="m4.800 7.800 5.400 8.400M10.200 7.800l-5.400 8.400" stroke="#fff" strokeWidth="2" />
      </svg>
      <Indicator $w={6} $c="#8a8a85" />
    </TaskIcon>
    <Tray>
      <ChevronUp size={16} strokeWidth={2} />
      <CloudSlot>
        <svg width="16" height="12" viewBox="0 0 16 12">
          <path d="M4 11.500a3.700 3.700 0 0 1-.4-7.400A4.800 4.800 0 0 1 12.300 3.800 3.900 3.900 0 0 1 12 11.500z" fill="#1a9bf4" />
          <path d="M3 11.300C.4 10.600-.4 8 .8 6.100 2 4.300 3.400 4.100 3.800 4 4.800 1.500 7 .4 9.300.9 6 3 4 7 3 11.300z" fill="#1558c7" />
        </svg>
      </CloudSlot>
      <Lang>ITA<br />IT</Lang>
      <svg width="18" height="18" viewBox="0 0 18 18"><path d="M11 1.500H2.500a1.500 1.500 0 0 0-1.500 1.500v9a1.500 1.500 0 0 0 1.500 1.500H12M5 16.500h7M7 13.500v3M10 13.500v3" fill="none" stroke="#1c1c1c" strokeWidth="1.200" /><path d="M12.500 1.500h4v4.500h-4zM14.500 6v10.500" fill="none" stroke="#1c1c1c" strokeWidth="1.200" /></svg>
      <svg width="32" height="18" viewBox="0 0 32 18"><path d="M8 7h2.500L14 3.500v11L10.500 11H8z" fill="none" stroke="#1c1c1c" strokeWidth="1.200" strokeLinejoin="round" /><path d="M16 6.500a4 4 0 0 1 0 5" fill="none" stroke="#1c1c1c" strokeWidth="1.100" /><path d="M18 4.500a7 7 0 0 1 0 9M20.300 3a9.500 9.500 0 0 1 0 12" fill="none" stroke="#b3bcbd" strokeWidth="1.100" /></svg>
      <Clock>08:42<br />24/10/2025</Clock>
    </Tray>
  </Taskbar>
);

export default function App() {
  return (
    <>
      <GlobalStyle />
      <Screen>
        <Browser />
        <Viewport>
          <Login />
          <Scrollbar>
            <svg width="9" height="7" viewBox="0 0 9 7"><path d="M4.500 0 9 5.500Q9 7 8 7H1Q0 7 0 5.500z" fill="#8b8b8b" /></svg>
            <Thumb />
            <svg width="9" height="7" viewBox="0 0 9 7"><path d="M4.500 7 9 1.500Q9 0 8 0H1Q0 0 0 1.500z" fill="#8b8b8b" /></svg>
          </Scrollbar>
        </Viewport>
        <WindowsTaskbar />
      </Screen>
    </>
  );
}
